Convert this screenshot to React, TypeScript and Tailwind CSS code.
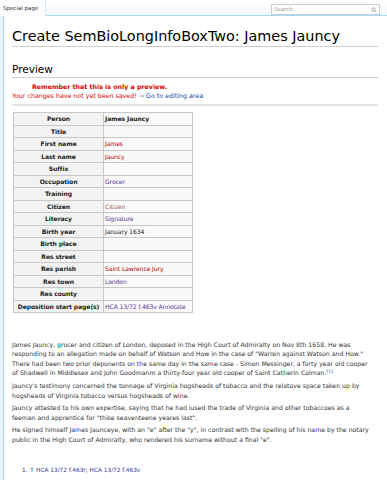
import React from "react";

const rows: [string, React.ReactNode][] = [
  ["Person", <span className="font-bold text-[#222]">James Jauncy</span>],
  ["Title", null],
  ["First name", <span className="text-[#ba0000]">James</span>],
  ["Last name", <span className="text-[#ba0000]">Jauncy</span>],
  ["Suffix", null],
  ["Occupation", <span className="text-[#5a3696]">Grocer</span>],
  ["Training", null],
  ["Citizen", <span className="text-[#a55858]">Citizen</span>],
  ["Literacy", <span className="text-[#5a3696]">Signature</span>],
  ["Birth year", <span className="text-[#222]">January 1634</span>],
  ["Birth place", null],
  ["Res street", null],
  ["Res parish", <span className="text-[#ba0000]">Saint Lawrence Jury</span>],
  ["Res town", <span className="text-[#5a3696]">London</span>],
  ["Res county", null],
  [
    "Deposition start page(s)",
    <span className="text-[#5a3696]">HCA 13/72 f.463v Annotate</span>,
  ],
];

function Lines({ lines }: { lines: React.ReactNode[] }) {
  return (
    <>
      {lines.map((l, i) => (
        <div key={i} className="whitespace-nowrap">
          {l}
        </div>
      ))}
    </>
  );
}

export default function App() {
  return (
    <div
      className="w-[387px] h-[480px] overflow-hidden bg-[#eaf4fc] text-[#222]"
      style={{ fontFamily: '"DejaVu Sans", Verdana, sans-serif' }}
    >
      {/* header */}
      <div className="flex h-[16px] bg-white">
        <div className="w-[46px] h-[16px] bg-gradient-to-b from-white to-[#fbfdff] border-r border-[#d8e8f5] text-[5.5px] text-[#333] pl-[3px] pt-[6px] leading-none">
          Special page
        </div>
        <div className="flex-1 flex justify-end items-start border-b border-[#a7d7f9] bg-gradient-to-b from-white to-[#f3f9fe]">
          <div className="mt-[4px] mr-[7px] w-[109px] h-[11px] border border-[#c8ccd1] bg-white flex items-center justify-between px-[2px]">
            <span className="text-[5.5px] text-[#999] leading-none">Search</span>
            <svg width="6" height="6" viewBox="0 0 12 12">
              <circle cx="5" cy="5" r="3.2" fill="none" stroke="#888" strokeWidth="1.6" />
              <line x1="7.5" y1="7.5" x2="10.5" y2="10.5" stroke="#888" strokeWidth="1.8" />
            </svg>
          </div>
        </div>
      </div>

      {/* content */}
      <div className="ml-[3px] h-[464px] bg-white border-l border-[#a7d7f9] pl-[8px] pr-[9px]">
        <h1 className="pt-[11px] text-[14.4px] leading-[18px] border-b border-[#cfcfcf] pb-[1px] text-black">
          Create SemBioLongInfoBoxTwo: James Jauncy
        </h1>
        <h2 className="mt-[16px] text-[10.5px] leading-[12px] border-b border-[#cfcfcf] pb-[2px] text-black">
          Preview
        </h2>
        <div className="mt-[4px] pl-[20px] text-[6.3px] leading-[9px] font-bold text-[#d00]">
          Remember that this is only a preview.
        </div>
        <div className="text-[6.3px] leading-[9px] text-[#d00]">
          Your changes have not yet been saved!{" "}
          <span className="text-[#888]">→</span>{" "}
          <span className="text-[#0645ad]">Go to editing area</span>
        </div>
        <div className="mt-[4px] h-[2px] bg-[#e4e4e4]" />

        <div className="mt-[6px] ml-[1px] grid grid-cols-[90px_89px] w-[180px] border-l border-t border-[#c8c8c8] text-[6.1px]">
          {rows.map(([label, value]) => (
            <React.Fragment key={label}>
              <div className="h-[12.5px] flex items-center justify-center font-bold bg-[#f2f2f2] border-r border-b border-[#c8c8c8] whitespace-nowrap tracking-[-0.1px]">
                {label}
              </div>
              <div className="h-[12.5px] flex items-center pl-[1px] bg-[#f9f9f9] border-r border-b border-[#c8c8c8] whitespace-nowrap tracking-[-0.1px]">
                {value}
              </div>
            </React.Fragment>
          ))}
        </div>

        <div className="mt-[27px] text-[6.2px] leading-[9.3px] text-[#333]">
          <Lines
            lines={[
              "James Jauncy, grocer and citizen of London, deposed in the High Court of Admiralty on Nov 8th 1658. He was",
              'responding to an allegation made on behalf of Watson and How in the case of "Warren against Watson and How."',
              "There had been two prior deponents on the same day in the same case - Simon Messinger, a forty year old cooper",
              <>
                of Shadwell in Middlesex and John Goodmanm a thirty-four year old cooper of Saint Catherin Colman.
                <span className="text-[#0645ad] text-[4.6px] relative top-[-2px]">[1]</span>
              </>,
            ]}
          />
          <div className="mt-[3.3px]">
            <Lines
              lines={[
                "Jauncy's testimony concerned the tonnage of Virginia hogsheads of tobacco and the relatove space taken up by",
                "hogsheads of Virginia tobacco versus hogsheads of wine.",
              ]}
            />
          </div>
          <div className="mt-[3.3px]">
            <Lines
              lines={[
                "Jauncy attested to his own expertise, saying that he had iused the trade of Virginia and other tobaccoes as a",
                'feeman and apprentice for "thise seaventeene yeares last".',
              ]}
            />
          </div>
          <div className="mt-[3.3px]">
            <Lines
              lines={[
                'He signed himself James Jaunceye, with an "e" after the "y", in contrast with the spelling of his name by the notary',
                'public in the High Court of Admiralty, who rendered his surname without a final "e".',
              ]}
            />
          </div>
          <div className="mt-[22px] pl-[10px] text-[5.8px]">
            1. <span className="text-[#0645ad]">↑</span>{" "}
            <span className="text-[#3b3ba0]">HCA 13/72 f.463r</span>;{" "}
            <span className="text-[#3b3ba0]">HCA 13/72 f.463v</span>
          </div>
        </div>
      </div>
    </div>
  );
}
